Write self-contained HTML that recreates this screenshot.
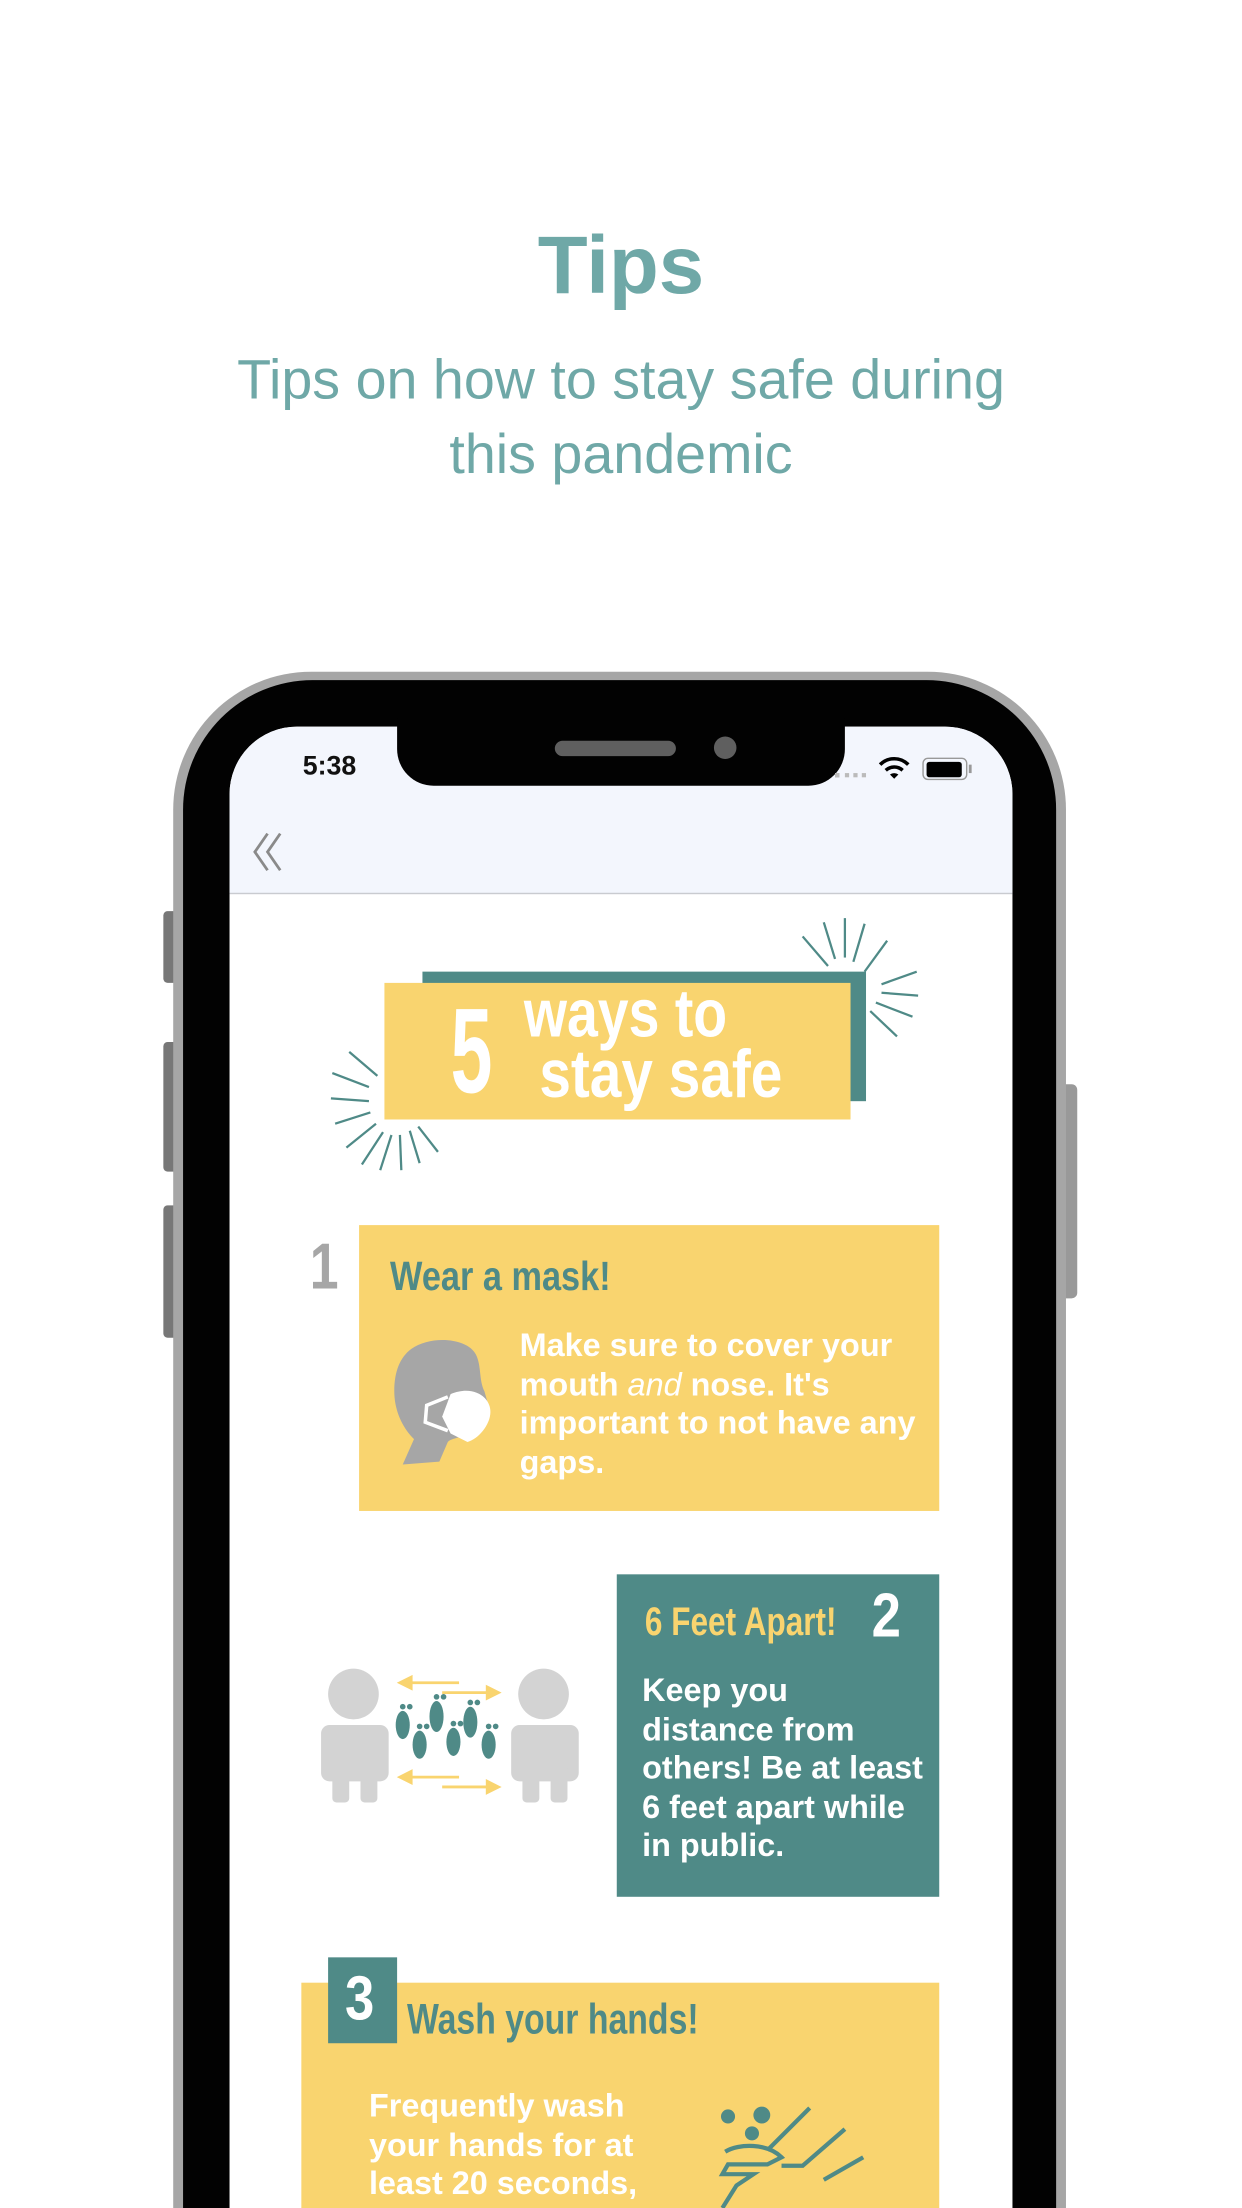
<!DOCTYPE html>
<html><head><meta charset="utf-8">
<style>
html,body{margin:0;padding:0;background:#fff;overflow:hidden;}
body{width:1242px;height:2208px;position:relative;}
#w{position:absolute;left:0;top:0;width:882px;height:1568px;overflow:hidden;transform:scale(1.40816);transform-origin:0 0;font-family:"Liberation Sans",sans-serif;}
.a{position:absolute;}
.cond{position:absolute;font-weight:bold;white-space:nowrap;transform-origin:0 0;}
.bt{position:absolute;color:#fff;font-weight:bold;font-size:23px;line-height:27.5px;white-space:nowrap;}
</style></head><body><div id="w">

<div class="a" style="left:0;width:882px;top:154px;text-align:center;color:#6fa8a7;font-weight:bold;font-size:58px;line-height:70px;">Tips</div>
<div class="a" style="left:0;width:882px;top:244px;text-align:center;color:#6fa8a7;font-size:39.5px;line-height:53px;">Tips on how to stay safe during<br>this pandemic</div>

<!-- side buttons -->
<div class="a" style="left:116px;top:647px;width:10px;height:51px;background:#777;border-radius:3px 0 0 3px;"></div>
<div class="a" style="left:116px;top:740px;width:10px;height:92px;background:#777;border-radius:3px 0 0 3px;"></div>
<div class="a" style="left:116px;top:856px;width:10px;height:94px;background:#777;border-radius:3px 0 0 3px;"></div>
<div class="a" style="left:755px;top:770px;width:10px;height:152px;background:#999;border-radius:0 4px 4px 0;"></div>

<!-- phone -->
<div class="a" style="left:123px;top:477px;width:634px;height:1200px;background:#a6a6a6;border-radius:98px;"></div>
<div class="a" style="left:130px;top:483px;width:620px;height:1200px;background:#020202;border-radius:92px;"></div>
<div class="a" style="left:163px;top:516px;width:556px;height:1160px;background:#fff;border-radius:48px;overflow:hidden;">
  <div class="a" style="left:0;top:0;width:556px;height:118px;background:#f3f6fd;border-bottom:1px solid #c9cbd0;"></div>
</div>
<!-- notch -->
<div class="a" style="left:282px;top:510px;width:318px;height:48px;background:#020202;border-radius:0 0 26px 26px;"></div>
<div class="a" style="left:394px;top:526px;width:86px;height:11px;background:#5f5f5f;border-radius:6px;"></div>
<div class="a" style="left:507px;top:523px;width:16px;height:16px;background:#5f5f5f;border-radius:50%;"></div>
<div class="a" style="left:215px;top:534px;font-size:19px;font-weight:bold;color:#111;">5:38</div>
<div class="a" style="left:593px;top:549px;width:22px;height:3px;border-top:3px dotted #bbb;"></div>
<svg class="a" style="left:624px;top:537px" width="22" height="17" viewBox="0 0 22 17"><path d="M1 6 A14 14 0 0 1 21 6" stroke="#000" stroke-width="2.5" fill="none"/><path d="M5 10 A9 9 0 0 1 17 10" stroke="#000" stroke-width="2.5" fill="none"/><path d="M8 13 L11 16 L14 13 A5 5 0 0 0 8 13Z" fill="#000"/></svg>
<div class="a" style="left:655px;top:538px;width:30px;height:14px;border:1.5px solid #999;border-radius:4px;"></div>
<div class="a" style="left:658px;top:541px;width:25px;height:11px;background:#000;border-radius:2px;"></div>
<div class="a" style="left:688px;top:543px;width:2px;height:6px;background:#999;"></div>
<svg class="a" style="left:178px;top:590px" width="32" height="30"><path d="M12 2 L3 15 L12 28 M21 2 L12 15 L21 28" stroke="#8a8a8a" stroke-width="2" fill="none"/></svg>

<!-- header graphic -->
<svg class="a" style="left:0;top:0" width="882" height="1568">
<g stroke="#4f8a87" stroke-width="1.6">
<line x1="570" y1="665" x2="588" y2="686"/><line x1="585" y1="655" x2="593" y2="681"/><line x1="600" y1="652" x2="600" y2="680"/><line x1="614" y1="656" x2="606" y2="683"/><line x1="630" y1="668" x2="614" y2="690"/><line x1="651" y1="690" x2="626" y2="699"/><line x1="652" y1="707" x2="626" y2="705"/><line x1="648" y1="722" x2="622" y2="712"/><line x1="637" y1="736" x2="618" y2="718"/>
<line x1="248" y1="747" x2="268" y2="764"/><line x1="236" y1="762" x2="262" y2="772"/><line x1="235" y1="780" x2="262" y2="782"/><line x1="238" y1="798" x2="263" y2="790"/><line x1="246" y1="815" x2="267" y2="798"/><line x1="257" y1="827" x2="272" y2="804"/><line x1="270" y1="831" x2="278" y2="806"/><line x1="285" y1="831" x2="284" y2="806"/><line x1="298" y1="826" x2="291" y2="803"/><line x1="311" y1="818" x2="297" y2="800"/>
</g>
<rect x="300" y="690" width="315" height="92" fill="#4f8a87"/>
<rect x="273" y="698" width="331" height="97" fill="#f9d46f"/>
</svg>
<div class="cond" style="left:320px;top:704px;font-size:86px;line-height:86px;color:#fff;transform:scaleX(0.62);">5</div>
<div class="cond" style="left:372px;top:697px;font-size:48px;line-height:48px;color:#fff;transform:scaleX(0.82);">ways to</div>
<div class="cond" style="left:383px;top:740px;font-size:48px;line-height:48px;color:#fff;transform:scaleX(0.84);">stay safe</div>

<!-- item 1 -->
<div class="cond" style="left:220px;top:876px;font-size:46px;line-height:46px;color:#a6a6a6;transform:scaleX(0.8);">1</div>
<div class="a" style="left:255px;top:870px;width:412px;height:203px;background:#f9d46f;"></div>
<div class="cond" style="left:277px;top:891px;font-size:29px;line-height:32px;color:#4f8a87;transform:scaleX(0.84);">Wear a mask!</div>
<svg class="a" style="left:278px;top:950px" width="72" height="92" viewBox="0 0 72 92">
<path d="M14 8 C28 -2 54 0 60 12 C64 20 62 30 66 38 L70 52 L62 62 C54 72 44 70 40 74 L34 88 L8 90 L16 72 C8 64 2 52 2 38 C2 24 6 14 14 8Z" fill="#a6a6a6"/>
<path d="M42 40 C56 34 68 40 70 50 C72 60 62 72 54 74 L42 68 L36 56Z" fill="#fff"/>
<path d="M40 42 L25 48 L24 60 L40 66" stroke="#fff" stroke-width="2.5" fill="none"/>
</svg>
<div class="bt" style="left:369px;top:942px;">Make sure to cover your<br>mouth <i style="font-weight:normal">and</i> nose. It's<br>important to not have any<br>gaps.</div>

<!-- item 2 -->
<svg class="a" style="left:226px;top:1183px" width="188" height="100" viewBox="0 0 188 100">
<circle cx="25" cy="20" r="18" fill="#d3d3d3"/><rect x="2" y="42" width="48" height="40" rx="6" fill="#d3d3d3"/><rect x="10" y="70" width="12" height="27" rx="3" fill="#d3d3d3"/><rect x="30" y="70" width="12" height="27" rx="3" fill="#d3d3d3"/>
<circle cx="160" cy="20" r="18" fill="#d3d3d3"/><rect x="137" y="42" width="48" height="40" rx="6" fill="#d3d3d3"/><rect x="145" y="70" width="12" height="27" rx="3" fill="#d3d3d3"/><rect x="165" y="70" width="12" height="27" rx="3" fill="#d3d3d3"/>
<g stroke="#f9d46f" stroke-width="2" fill="#f9d46f"><line x1="62" y1="12" x2="100" y2="12"/><path d="M58 12 L66 8 L66 16Z"/><line x1="88" y1="19" x2="124" y2="19"/><path d="M128 19 L120 15 L120 23Z"/><line x1="62" y1="79" x2="100" y2="79"/><path d="M58 79 L66 75 L66 83Z"/><line x1="88" y1="86" x2="124" y2="86"/><path d="M128 86 L120 82 L120 90Z"/></g>
<g fill="#4f8a87"><ellipse cx="60" cy="42" rx="5" ry="10"/><ellipse cx="72" cy="56" rx="5" ry="10"/><ellipse cx="84" cy="36" rx="5" ry="11"/><ellipse cx="96" cy="54" rx="5" ry="10"/><ellipse cx="108" cy="40" rx="5" ry="11"/><ellipse cx="121" cy="56" rx="5" ry="10"/>
<circle cx="60" cy="29" r="2"/><circle cx="65" cy="29" r="2"/><circle cx="72" cy="43" r="2"/><circle cx="77" cy="43" r="2"/><circle cx="84" cy="22" r="2"/><circle cx="89" cy="22" r="2"/><circle cx="96" cy="41" r="2"/><circle cx="101" cy="41" r="2"/><circle cx="108" cy="26" r="2"/><circle cx="113" cy="26" r="2"/><circle cx="121" cy="43" r="2"/><circle cx="126" cy="43" r="2"/></g>
</svg>
<div class="a" style="left:438px;top:1118px;width:229px;height:229px;background:#4f8a87;"></div>
<div class="cond" style="left:458px;top:1136px;font-size:28px;line-height:32px;color:#f9d46f;transform:scaleX(0.8);">6 Feet Apart!</div>
<div class="cond" style="left:619px;top:1126px;font-size:44px;line-height:44px;color:#fff;transform:scaleX(0.85);">2</div>
<div class="bt" style="left:456px;top:1187px;">Keep you<br>distance from<br>others! Be at least<br>6 feet apart while<br>in public.</div>

<!-- item 3 -->
<div class="a" style="left:214px;top:1408px;width:453px;height:200px;background:#f9d46f;"></div>
<div class="a" style="left:233px;top:1390px;width:49px;height:61px;background:#4f8a87;"></div>
<div class="cond" style="left:245px;top:1398px;font-size:44px;line-height:44px;color:#fff;transform:scaleX(0.85);">3</div>
<div class="cond" style="left:289px;top:1418px;font-size:30px;line-height:34px;color:#4f8a87;transform:scaleX(0.8);">Wash your hands!</div>
<div class="bt" style="left:262px;top:1482px;">Frequently wash<br>your hands for at<br>least 20 seconds,</div>
<svg class="a" style="left:505px;top:1492px" width="115" height="80" viewBox="0 0 115 80">
<g fill="#4f8a87"><circle cx="12" cy="11" r="5"/><circle cx="36" cy="10" r="6"/><circle cx="29" cy="23" r="5"/></g>
<g stroke="#4f8a87" stroke-width="3" fill="none"><path d="M70 5 L40 35"/><path d="M95 20 L65 46 L50 46"/><path d="M108 40 L80 56"/><path d="M10 36 C20 30 40 30 50 40 L40 45 L12 45 L8 52 L30 52 L18 60 L8 76"/></g>
</svg>

</div></body></html>
